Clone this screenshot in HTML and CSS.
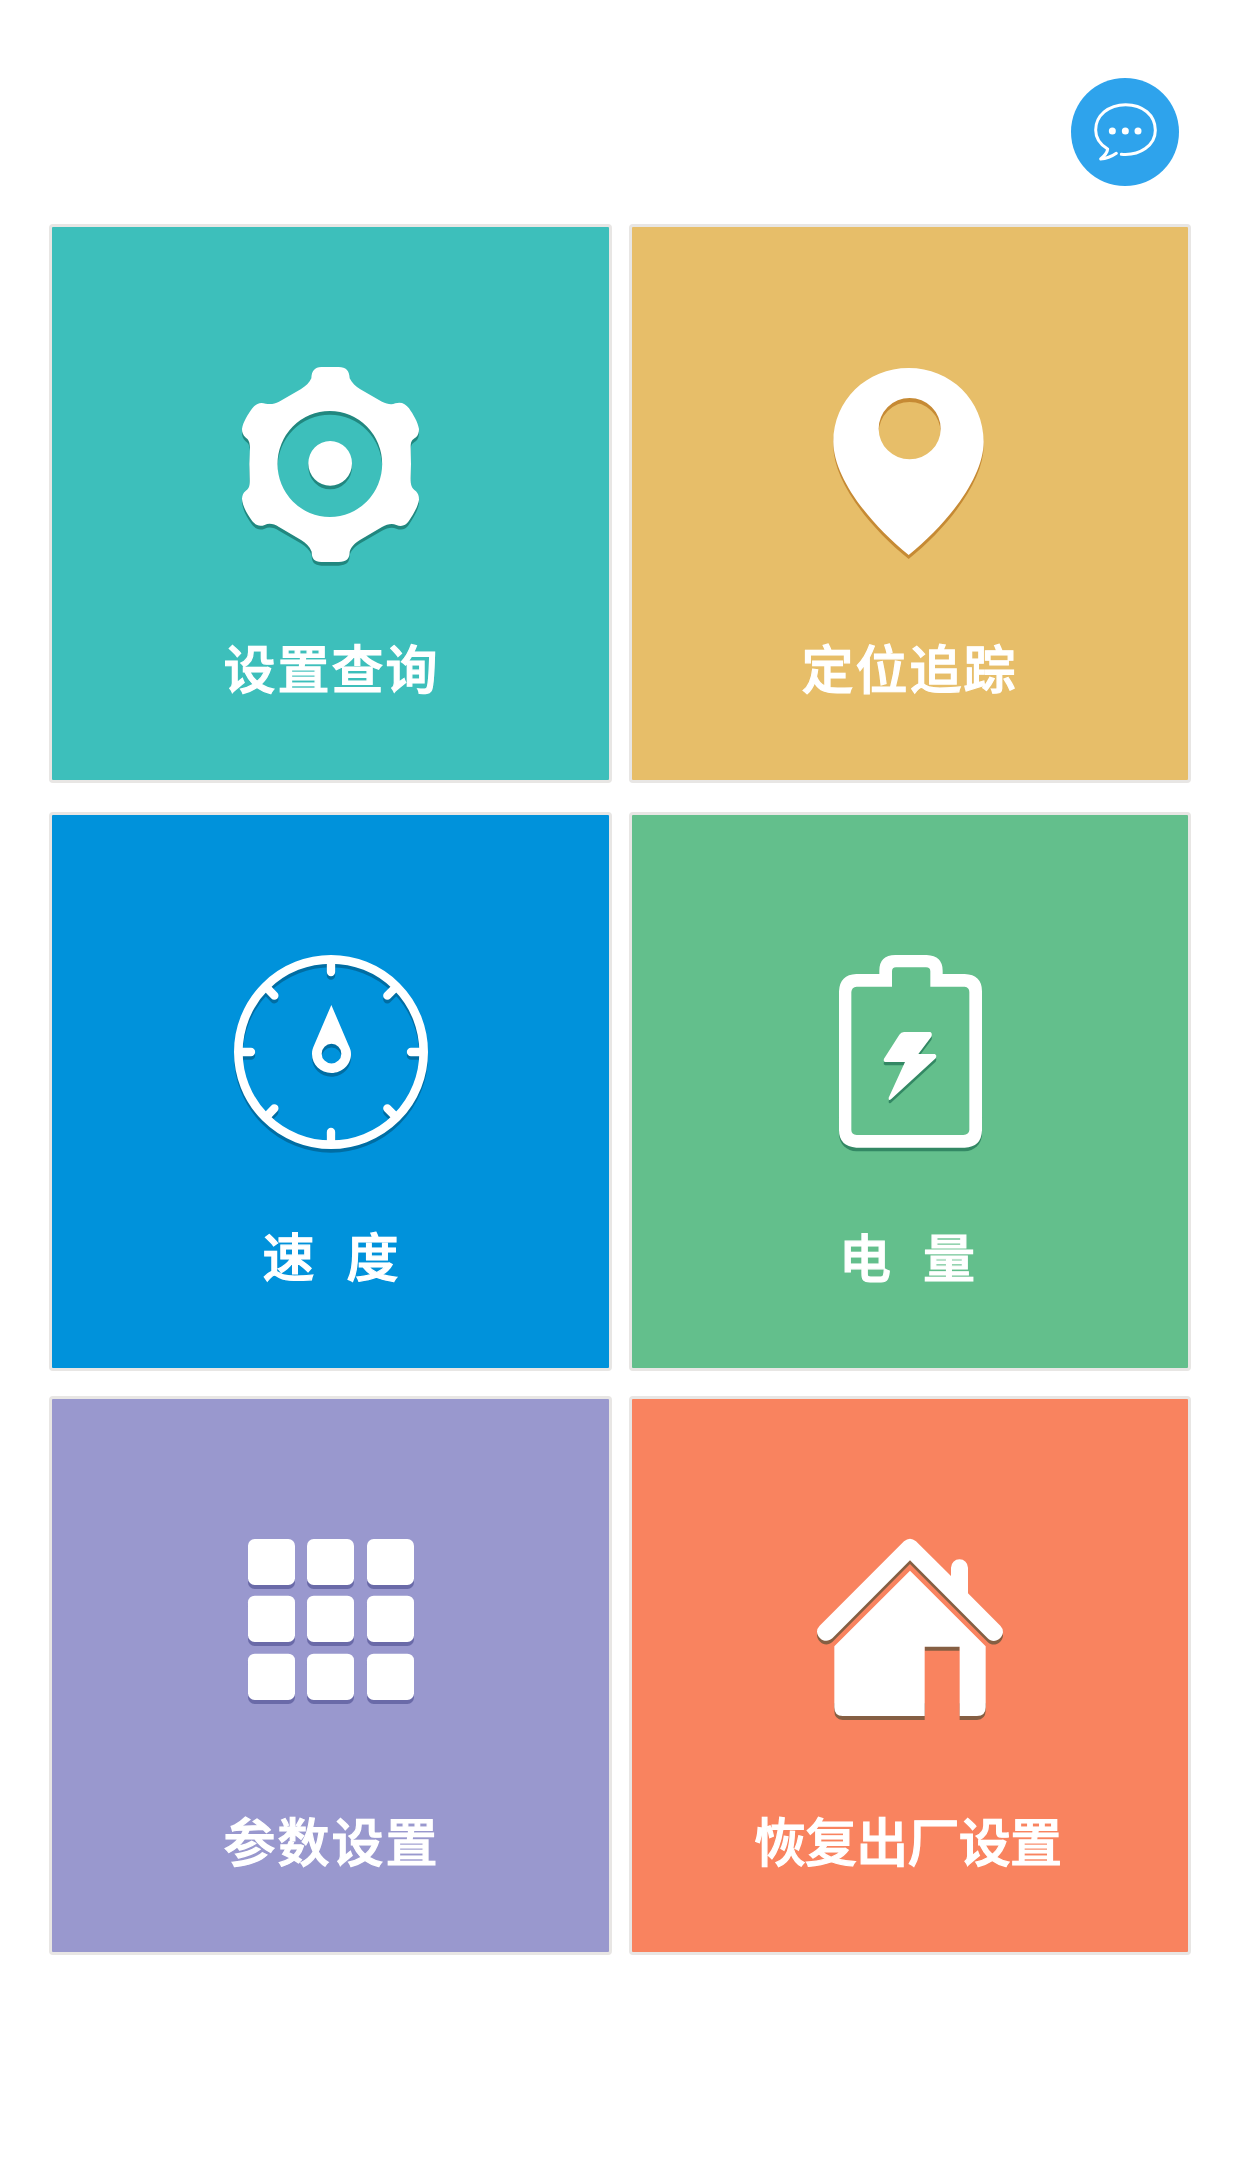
FILE: index.html
```html
<!DOCTYPE html>
<html lang="zh-CN">
<head>
<meta charset="utf-8">
<title>设置</title>
<link rel="stylesheet" href="styles.css">
</head>
<body>
<header class="topbar">
  <button class="chat" aria-label="消息">
    <svg viewBox="33 54 324 324">
      <path class="chat-line" d="M184 283C240 288 286 256 286 211C286 165 248 134 197 134C145 134 107 167 107 210C107 235 121 254 143 267C142 278 134 287 122 297C142 296 156 289 169 280"/>
      <circle cx="157" cy="213" r="10.500"/><circle cx="196" cy="213" r="10.500"/><circle cx="234" cy="213" r="10.500"/>
    </svg>
  </button>
</header>
<main class="tiles">
  <div class="row">
    <a class="tile teal">
      <svg class="icon" viewBox="-27 -9 720 720">
        <defs><path id="gear" fill-rule="evenodd" d="M304 51H356C378 52 388 61 389 85C396 99 407 110 421 118L486 155C501 162 514 165 526 160C544 155 556 161 567 175C580 194 593 215 597 237C597 248 594 256 588 262C575 270 572 275 572 292L573 342L572 385C572 407 574 413 588 424C594 430 597 438 597 449C594 470 580 493 566 514C557 527 544 531 529 525C514 519 501 524 486 531L421 569C405 579 394 589 389 605C389 626 380 635 356 636H304C283 635 275 626 275 605C269 589 258 579 242 569L177 531C162 522 148 518 134 525C119 531 107 526 97 514C82 493 68 470 66 446C67 436 70 428 76 424C87 415 90 410 89 385L88 342L90 292C89 276 86 269 76 262C69 255 66 247 66 237C69 216 84 193 97 175C108 161 120 155 137 161C151 164 164 162 177 155L242 118C257 109 269 98 274 85C275 62 284 52 304 51ZM172.500 342a157 159 0 1 0 314 0a157 159 0 1 0-314 0ZM265 340a65.500 67 0 1 0 131 0a65.500 67 0 1 0-131 0Z"/></defs>
        <use href="#gear" y="11" class="shade"/><use href="#gear"/>
      </svg>
      <span class="label">设置查询</span>
    </a>
    <a class="tile sand">
      <svg class="icon" viewBox="-60 -9 720 720">
        <defs><path id="pin" fill-rule="evenodd" d="M296 54C422 54 521 151 521 275C521 382 414 520 296 615C178 520 70 382 70 275C70 151 170 54 296 54ZM206 236a93 92 0 1 0 186 0a93 92 0 1 0-186 0Z"/></defs>
        <use href="#pin" y="12" class="shade"/><use href="#pin"/>
      </svg>
      <span class="label locate">定位追踪</span>
    </a>
  </div>
  <div class="row">
    <a class="tile blue">
      <svg class="icon" viewBox="-27 -15 720 720">
        <defs>
          <g id="gauge">
            <circle class="ring" cx="333" cy="336" r="278"/>
            <path class="ticks" d="M333 60V96M333 612V576M57 336H93M609 336H573M140 143L163 167M526 143L502 167M140 529L163 505M526 529L502 505"/>
            <path stroke="none" fill-rule="evenodd" d="M334 195L385 314C391 327 393 332 393 342C393 374 366 399 334 399C302 399 276 374 276 342C276 331 278 325 283 314ZM305 341a29.500 29.500 0 1 0 59 0a29.500 29.500 0 1 0-59 0Z"/>
          </g>
        </defs>
        <use href="#gauge" y="11" class="shade"/><use href="#gauge"/>
      </svg>
      <span class="label wide">速度</span>
    </a>
    <a class="tile green">
      <svg class="icon" viewBox="-90 -15 720 720">
        <rect class="shade" stroke="none" x="57" y="480" width="429" height="154" rx="52"/>
        <path stroke="none" d="M109 102H178V92Q178 45 226 45H320Q368 47 368 92V102H434Q486 104 486 154V571Q484 622 434 623H109Q57 619 57 571V154Q59 104 109 102Z"/>
        <path class="cell" d="M110 140H216V94Q216 82 228 82H318Q331 82 331 94V140H434Q448 142 448 156V570Q447 584 430 585H110Q94 584 94 570V156Q95 141 110 140Z"/>
        <defs><path id="bolt" d="M252 276H331Q338 280 334 290L295 342H344Q352 345 347 355L213 478Q205 484 206 473L255 366H196Q189 364 192 356L238 284Q243 276 252 276Z"/></defs>
        <use href="#bolt" y="10" class="shade"/><use href="#bolt"/>
      </svg>
      <span class="label wide power">电量</span>
    </a>
  </div>
  <div class="row last">
    <a class="tile violet">
      <svg class="icon" viewBox="-57 -3 720 720">
        <defs><g id="keys">
          <rect x="54" y="57" width="141" height="138" rx="20"/><rect x="231" y="57" width="141" height="138" rx="20"/><rect x="411" y="57" width="141" height="138" rx="20"/>
          <rect x="54" y="227" width="141" height="139" rx="20"/><rect x="231" y="227" width="141" height="139" rx="20"/><rect x="411" y="227" width="141" height="139" rx="20"/>
          <rect x="54" y="401" width="141" height="139" rx="20"/><rect x="231" y="401" width="141" height="139" rx="20"/><rect x="411" y="401" width="141" height="139" rx="20"/>
        </g></defs>
        <use href="#keys" y="12" class="shade"/><use href="#keys"/>
      </svg>
      <span class="label">参数设置</span>
    </a>
    <a class="tile coral">
      <svg class="icon" viewBox="-30 -3 720 720">
        <defs><path id="roof" d="M312 64Q330 49 348 64L453 168V143A25.500 25.500 0 0 1 504 143V220L601 317Q610 326 609 337C606 359 580 372 563 355L330 121L97 355C80 371 53 359 51 335Q51 325 59 317Z"/></defs>
        <use href="#roof" y="11" class="shade"/>
        <path class="shade" d="M103 550H374V600H128Q103 598 103 573ZM479 550H557V573Q556 598 531 600H479ZM374 378H479V392H374Z"/>
        <path d="M330 152L557 379V562Q557 588 531 588H479V380H374V588H128Q103 588 103 562V379Z"/>
        <use href="#roof"/>
      </svg>
      <span class="label tight">恢复出厂设置</span>
    </a>
  </div>
</main>
</body>
</html>
```
FILE: styles.css
```css
* { box-sizing: border-box; }
body {
  margin: 0;
  background: #fff;
  font-family: "Noto Sans CJK SC", sans-serif;
}
.topbar {
  display: flex;
  justify-content: flex-end;
  height: 224px;
  padding: 78px 63px 0 0;
}
.chat {
  width: 108px;
  height: 108px;
  padding: 0;
  border: 0;
  border-radius: 50%;
  background: #2ea3ec;
}
.chat svg { display: block; width: 108px; height: 108px; fill: #fff; }
.chat-line { fill: none; stroke: #fff; stroke-width: 9; stroke-linecap: round; stroke-linejoin: round; }
.tiles { padding-left: 49px; }
.row {
  display: grid;
  grid-template-columns: 563px 562px;
  column-gap: 17px;
  height: 559px;
  margin-bottom: 29px;
}
.row.last { margin-top: -4px; margin-bottom: 0; }
.tile {
  display: flex;
  flex-direction: column;
  align-items: center;
  padding-top: 120px;
  border: 3px solid #e8e6e4;
  border-radius: 4px;
  color: #fff;
}
.icon { width: 240px; height: 240px; fill: #fff; stroke: #fff; stroke-width: 0; flex: none; }
.teal { background: #3dbfbb; --shade: #21877f; }
.sand { background: #e7be69; --shade: #c68a34; }
.blue { background: #0092db; --shade: #006da3; }
.green { background: #63bf8c; --shade: #338864; }
.violet { background: #9998ce; --shade: #6a6aa8; }
.coral { background: #f9835f; --shade: #855f43; }
.shade { fill: var(--shade); stroke: var(--shade); }
.ring { fill: none; stroke-width: 26; }
.ticks { fill: none; stroke-width: 25; stroke-linecap: round; }
.cell { fill: #63bf8c; }
.label {
  margin-top: 40px;
  font-size: 52px;
  line-height: 80px;
  font-weight: 500;
  letter-spacing: 2px;
  margin-right: -2px;
  white-space: nowrap;
  -webkit-text-stroke: 1.2px #fff;
}
.last .label { margin-top: 41px; }
.locate { margin-right: 1px; }
.wide { letter-spacing: 32px; margin-right: -32px; }
.power { margin-top: 41px; margin-right: -26px; }
.tight { letter-spacing: -0.8px; margin-right: 5px; }
```
